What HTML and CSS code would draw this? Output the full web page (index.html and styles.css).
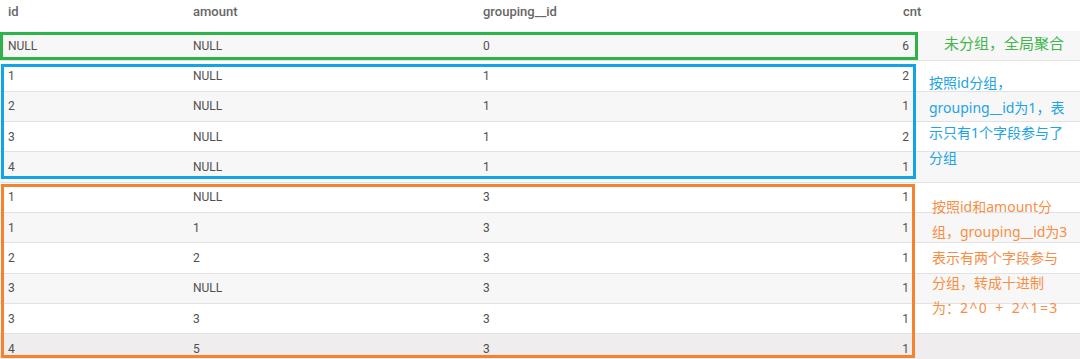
FILE: index.html
```html
<!DOCTYPE html>
<html>
<head>
<meta charset="utf-8">
<link rel="stylesheet" href="styles.css">
</head>
<body>
<div class="sheet">
  <div class="row head">
    <div class="c">id</div><div class="c">amount</div><div class="c">grouping__id</div><div class="c cnt">cnt</div><div></div>
  </div>
  <div class="row odd"><div class="c">NULL</div><div class="c">NULL</div><div class="c">0</div><div class="c cnt">6</div><div></div></div>
  <div class="row"><div class="c">1</div><div class="c">NULL</div><div class="c">1</div><div class="c cnt">2</div><div></div></div>
  <div class="row odd"><div class="c">2</div><div class="c">NULL</div><div class="c">1</div><div class="c cnt">1</div><div></div></div>
  <div class="row"><div class="c">3</div><div class="c">NULL</div><div class="c">1</div><div class="c cnt">2</div><div></div></div>
  <div class="row odd"><div class="c">4</div><div class="c">NULL</div><div class="c">1</div><div class="c cnt">1</div><div></div></div>
  <div class="row"><div class="c">1</div><div class="c">NULL</div><div class="c">3</div><div class="c cnt">1</div><div></div></div>
  <div class="row odd"><div class="c">1</div><div class="c">1</div><div class="c">3</div><div class="c cnt">1</div><div></div></div>
  <div class="row"><div class="c">2</div><div class="c">2</div><div class="c">3</div><div class="c cnt">1</div><div></div></div>
  <div class="row odd"><div class="c">3</div><div class="c">NULL</div><div class="c">3</div><div class="c cnt">1</div><div></div></div>
  <div class="row"><div class="c">3</div><div class="c">3</div><div class="c">3</div><div class="c cnt">1</div><div></div></div>
  <div class="row hover"><div class="c">4</div><div class="c">5</div><div class="c">3</div><div class="c cnt">1</div><div></div></div>

  <div class="box box-green"></div>
  <div class="box box-blue"></div>
  <div class="box box-orange"></div>

  <div class="note note-green">未分组，全局聚合</div>
  <div class="note note-blue">按照id分组，<br>grouping__id为1，表<br>示只有1个字段参与了<br>分组</div>
  <div class="note note-orange">按照id和amount分<br>组，grouping__id为3<br>表示有两个字段参与<br>分组，转成十进制<br>为：<span class="formula">2^0 + 2^1=3</span></div>
</div>
</body>
</html>
```

FILE: styles.css
```css
html, body {
  margin: 0;
  padding: 0;
  background: #ffffff;
}
body {
  width: 1080px;
  height: 359px;
  overflow: hidden;
  font-family: Roboto, "Liberation Sans", sans-serif;
}
.sheet {
  position: relative;
  width: 1080px;
}
.row {
  display: grid;
  grid-template-columns: 185px 290px 420px 40px 1fr;
  align-items: center;
  height: 30.33px;
  box-sizing: border-box;
  border-bottom: 1px solid #e2e2e2;
  background: #ffffff;
  font-size: 12px;
  color: #505050;
}
.row.odd {
  background: #f7f7f7;
}
.row.hover {
  background: #efeded;
}
.row.head {
  height: 31px;
  border-bottom: none;
  font-size: 13px;
  font-weight: 500;
  color: #666666;
  align-items: start;
  padding-top: 4px;
}
.c {
  padding-left: 8px;
  white-space: nowrap;
}
.row .cnt {
  text-align: right;
  padding-left: 0;
  padding-right: 26px;
}
.row.head .cnt {
  text-align: left;
  padding-left: 8px;
  padding-right: 0;
}
.box {
  position: absolute;
  box-sizing: border-box;
  border-width: 3px;
  border-style: solid;
}
.box-green {
  left: 0;
  top: 32px;
  width: 918px;
  height: 28px;
  border-color: #2eb34b;
}
.box-blue {
  left: 1px;
  top: 64px;
  width: 915px;
  height: 115px;
  border-color: #12a4e6;
}
.box-orange {
  left: 1px;
  top: 184px;
  width: 914px;
  height: 174px;
  border-color: #f7822e;
}
.note {
  position: absolute;
  font-family: "Noto Sans", "Noto Sans CJK SC", sans-serif;
  font-size: 14px;
  line-height: 25.3px;
  white-space: nowrap;
}
.note-green {
  left: 944px;
  top: 32px;
  font-size: 15px;
  line-height: 22px;
  color: #41b64c;
}
.note-blue {
  left: 929px;
  top: 70px;
  line-height: 25px;
  color: #22a3e4;
}
.note-orange {
  left: 932px;
  top: 194px;
  color: #f98d44;
}
.formula {
  letter-spacing: 1.4px;
  word-spacing: 2px;
}
```
